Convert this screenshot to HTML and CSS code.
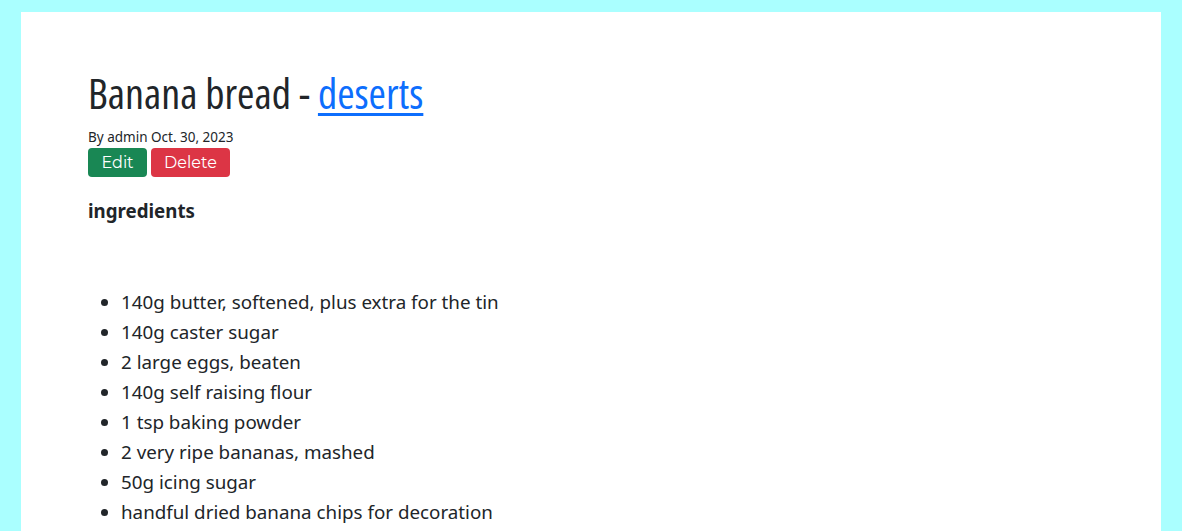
FILE: index.html
```html
<!DOCTYPE html>
<html lang="en">
<head>
<meta charset="utf-8">
<title>Banana bread</title>
<link rel="stylesheet" href="styles.css">
</head>
<body>
<main class="page">
  <article class="recipe">
    <h1 class="title">Banana bread - <a href="#" class="cat">deserts</a></h1>
    <p class="meta">By admin Oct. 30, 2023</p>
    <div class="actions">
      <a href="#" class="btn btn-edit">Edit</a>
      <a href="#" class="btn btn-delete">Delete</a>
    </div>
    <h2 class="section">ingredients</h2>
    <ul class="ingredients">
      <li>140g butter, softened, plus extra for the tin</li>
      <li>140g caster sugar</li>
      <li>2 large eggs, beaten</li>
      <li>140g self raising flour</li>
      <li>1 tsp baking powder</li>
      <li>2 very ripe bananas, mashed</li>
      <li>50g icing sugar</li>
      <li>handful dried banana chips for decoration</li>
    </ul>
  </article>
</main>
</body>
</html>
```
FILE: styles.css
```css
html, body {
  margin: 0;
  padding: 0;
}
body {
  background: #aaffff;
  font-family: "Noto Sans", "Open Sans", sans-serif;
  color: #212529;
  padding-top: 12px;
}
.page {
  width: 1140px;
  margin: 0 auto;
  background: #fff;
  min-height: 600px;
  box-sizing: border-box;
  padding: 57px 67px 0;
}
.title {
  margin: 0 0 9px;
  font-family: "Open Sans", sans-serif;
  font-stretch: 75%;
  font-weight: 400;
  font-size: 42px;
  line-height: 48px;
  color: #212529;
}
.cat {
  color: #0d6efd;
  text-decoration: underline;
  text-decoration-thickness: 3px;
  text-underline-offset: 4px;
}
.meta {
  margin: 0;
  font-size: 13.5px;
  line-height: 21px;
  padding-top: 1px;
}
.actions {
  display: flex;
  gap: 4px;
}
.btn {
  display: inline-block;
  font-family: "Montserrat", "Lato", sans-serif;
  font-size: 16px;
  line-height: 19px;
  padding: 5px 13.5px;
  border-radius: 4px;
  color: #fff;
  text-decoration: none;
}
.btn-delete { padding: 5px 13px; }
.btn-edit { background: #198754; }
.btn-delete { background: #dc3545; }
.section {
  margin: 20px 0 0;
  font-size: 18.7px;
  font-weight: 700;
  line-height: 27px;
}
.ingredients {
  margin: 63px 0 0;
  padding-left: 33px;
  font-size: 18.8px;
  line-height: 30px;
}
```
